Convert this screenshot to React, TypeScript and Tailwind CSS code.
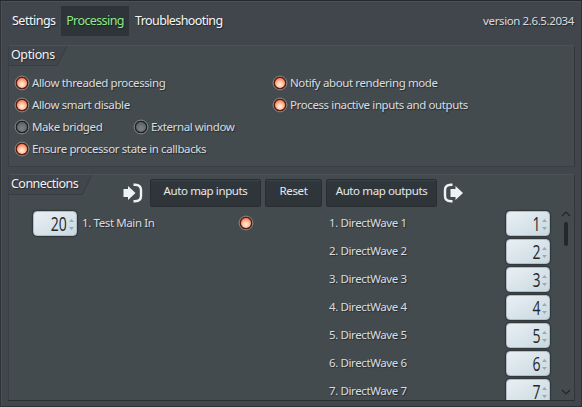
import { ReactNode } from 'react';

const shadow = '[text-shadow:1px_1px_1px_rgba(20,24,27,0.6)]';

function Label({ children, className = '' }: { children: ReactNode; className?: string }) {
  return <span className={`whitespace-nowrap ${shadow} ${className}`}>{children}</span>;
}

function Led({ on = false }: { on?: boolean }) {
  const id = on ? 'led-on' : 'led-off';
  return (
    <svg width="16" height="16" viewBox="0 0 16 16" className="shrink-0">
      <defs>
        <radialGradient id={id} cx="50%" cy="65%" r="60%">
          <stop offset="0" stopColor={on ? '#fff4e0' : '#7b8185'} />
          <stop offset="0.5" stopColor={on ? '#ffc8a6' : '#6d7377'} />
          <stop offset="1" stopColor={on ? '#fa8058' : '#5c6266'} />
        </radialGradient>
      </defs>
      <circle cx="8" cy="8" r="6.9" fill={on ? '#591d12' : '#1e2326'} stroke="#858b8e" strokeWidth="1" />
      <circle cx="8" cy="8" r="5" fill={`url(#${id})`} />
    </svg>
  );
}

function Option({ text, on = false }: { text: string; on?: boolean }) {
  return (
    <div className="flex h-[22px] items-center gap-[2px]">
      <Led on={on} />
      <Label>{text}</Label>
    </div>
  );
}

function PanelTab({ title, width, className = '' }: { title: string; width: number; className?: string }) {
  return (
    <div className="relative h-[20px] w-[90px] shrink-0">
      <svg width={width + 2} height="20" className="absolute left-0 top-0">
        <polygon points={`0,0 ${width},0 ${width - 10},19 0,19`} fill="#41464c" />
        <polyline points={`${width},0 ${width - 10},19.5 0,19.5`} fill="none" stroke="#363d41" />
      </svg>
      <Label className={`absolute left-[2px] top-0 text-[12.5px] leading-[17px] text-[#f0f2f3] ${className}`}>{title}</Label>
    </div>
  );
}

function Button({ children, className }: { children: ReactNode; className: string }) {
  return (
    <button
      className={`flex h-[28px] items-center justify-center whitespace-nowrap rounded-[2px] border border-[#272d31] bg-linear-to-b from-[#30373c] to-[#2e3438] pb-[4px] text-[#e6e9eb] shadow-[inset_0_1px_0_#3b4247] ${className}`}
    >
      {children}
    </button>
  );
}

function NumberBox({ value }: { value: number }) {
  return (
    <div className="flex h-[25px] w-[44px] shrink-0 items-center justify-end rounded-[4px] border border-[#b3bdc3] bg-linear-to-br from-[#e9f0f4] to-[#c9d9e1] pr-[1px] shadow-[0_0_1px_1px_#30373b]">
      <span className="origin-right scale-x-[0.7] font-['Open_Sans',sans-serif] text-[20px] leading-[23px] tracking-normal text-[#25282b]">{value}</span>
      <svg width="7" height="13" viewBox="0 0 7 13" className="ml-[1px] mt-[1px]" fill="#a0a9ae">
        <path d="M1 4L3.5 1L6 4ZM1 9L3.5 12L6 9Z" />
      </svg>
    </div>
  );
}

const outputs = [1, 2, 3, 4, 5, 6, 7];

export default function App() {
  return (
    <div className="flex h-[407px] w-[582px] flex-col overflow-hidden border border-t-[#23292c] border-r-[#2e3438] border-b-[#2b3134] border-l-[#2d3337] bg-[#41464c] pl-[7px] pr-[6px] font-['Noto_Sans','Open_Sans',sans-serif] text-[11.5px] leading-[16px] tracking-[-0.39px] text-[#d8dde0] shadow-[inset_1px_1px_0_#4a5055]">
      <header className="flex h-[44px] shrink-0 items-start pt-[5px] text-[12.5px]">
        <div className="flex h-[30px] w-[53px] items-center pl-[4px]">
          <Label className="tracking-[-0.5px] text-[#f4f6f7]">Settings</Label>
        </div>
        <div className="flex h-[30px] w-[68px] items-center justify-center bg-[#2e3538]">
          <Label className="tracking-[-0.6px] text-[#8ee886]">Processing</Label>
        </div>
        <div className="flex h-[30px] items-center pl-[6px]">
          <Label className="tracking-[-0.6px] text-[#f4f6f7]">Troubleshooting</Label>
        </div>
        <div className="ml-auto flex h-[30px] items-center pr-[1px]">
          <Label className="text-[11.5px]">version 2.6.5.2034</Label>
        </div>
      </header>

      <section className="flex h-[122px] shrink-0 flex-col border border-t-[#4b5155] border-r-[#30363a] border-b-[#393f43] border-l-[#393f43] bg-[#444b4e]">
        <PanelTab title="Options" width={58} />
        <div className="flex pl-[5px] pt-[6px]">
          <div className="w-[258px]">
            <Option on text="Allow threaded processing" />
            <Option on text="Allow smart disable" />
            <div className="flex">
              <div className="w-[119px]"><Option text="Make bridged" /></div>
              <Option text="External window" />
            </div>
            <Option on text="Ensure processor state in callbacks" />
          </div>
          <div>
            <Option on text="Notify about rendering mode" />
            <Option on text="Process inactive inputs and outputs" />
          </div>
        </div>
      </section>

      <section className="mt-[7px] flex h-[227px] shrink-0 flex-col overflow-hidden border border-t-[#4b5155] border-r-[#30363a] border-b-[#282e32] border-l-[#393f43] bg-[#444b4e]">
        <div className="flex h-[36px] shrink-0">
          <PanelTab title="Connections" width={83} className="tracking-[-0.53px]" />
          <div className="flex items-center pl-[24px]">
            <svg width="20" height="20" viewBox="0 0 20 20" className="mr-[7px]">
              <path d="M0.5 6H5V3L12.5 10L5 17V14H0.5Z" fill="#edf3f5" />
              <path d="M10.5 1.8H12Q18 2 18 7V13Q18 18 12 18.2H10.5" fill="none" stroke="#edf3f5" strokeWidth="2.4" />
            </svg>
            <div className="flex gap-[4px]">
              <Button className="w-[111px]">Auto map inputs</Button>
              <Button className="w-[57px]">Reset</Button>
              <Button className="w-[111px]">Auto map outputs</Button>
            </div>
            <svg width="20" height="20" viewBox="0 0 20 20" className="ml-[6px]">
              <path d="M9.5 1.8H8Q2 2 2 7V13Q2 18 8 18.2H9.5" fill="none" stroke="#edf3f5" strokeWidth="2.4" />
              <path d="M7.5 6H12.5V3L20 10L12.5 17V14H7.5Z" fill="#edf3f5" />
            </svg>
          </div>
        </div>
        <div className="flex min-h-0 flex-1">
          <div className="flex w-[320px] items-start pl-[24px]">
            <NumberBox value={20} />
            <Label className="ml-[5px] mt-[4px] w-[156px]">1. Test Main In</Label>
            <div className="mt-[4px]"><Led on /></div>
          </div>
          <div className="flex w-[221px] flex-col gap-[3px]">
            {outputs.map((n) => (
              <div key={n} className="flex h-[25px] shrink-0 items-start justify-between">
                <Label className="mt-[4px]">{n}. DirectWave {n}</Label>
                <NumberBox value={n} />
              </div>
            ))}
          </div>
          <div className="flex w-[24px] flex-col items-center pb-[4px] pl-[8px]">
            <svg width="10" height="7" viewBox="0 0 10 7" className="shrink-0" fill="none" stroke="#20262a" strokeWidth="1.2">
              <path d="M1 5L5 1L9 5" />
            </svg>
            <div className="mt-[4px] h-[24px] w-[4px] shrink-0 rounded-[2px] bg-[#22282c]" />
            <svg width="10" height="7" viewBox="0 0 10 7" className="mt-auto shrink-0" fill="none" stroke="#20262a" strokeWidth="1.2">
              <path d="M1 1L5 5L9 1" />
            </svg>
          </div>
        </div>
      </section>
    </div>
  );
}
